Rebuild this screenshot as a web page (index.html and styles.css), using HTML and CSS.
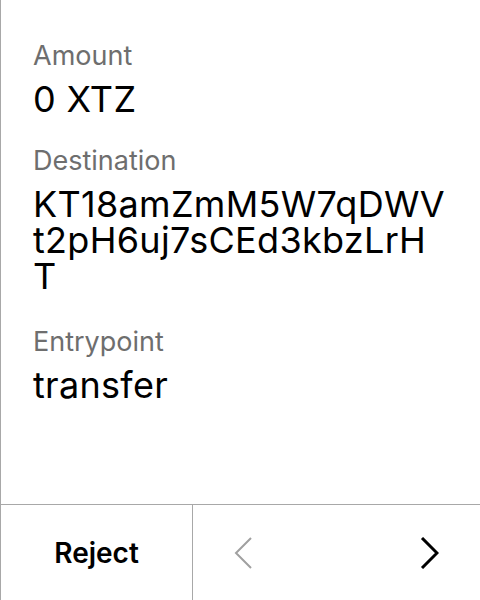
FILE: index.html
```html
<!DOCTYPE html>
<html>
<head>
<meta charset="utf-8">
<link rel="stylesheet" href="styles.css">
</head>
<body>
<div class="screen">
  <div class="content">
    <div class="field">
      <div class="label">Amount</div>
      <div class="value">0 XTZ</div>
    </div>
    <div class="field">
      <div class="label">Destination</div>
      <div class="value multi">KT18amZmM5W7qDWVt2pH6uj7sCEd3kbzLrHT</div>
    </div>
    <div class="field">
      <div class="label">Entrypoint</div>
      <div class="value">transfer</div>
    </div>
  </div>
  <div class="footer">
    <div class="reject">Reject</div>
    <div class="nav">
      <svg class="chev prev" width="20" height="32" viewBox="0 0 20 32"><path d="M17 1 L2 16 L17 31" fill="none" stroke="#a0a0a0" stroke-width="2"/></svg>
      <svg class="chev next" width="20" height="32" viewBox="0 0 20 32"><path d="M3 1 L18 16 L3 31" fill="none" stroke="#000" stroke-width="3"/></svg>
    </div>
  </div>
</div>
</body>
</html>
```
FILE: styles.css
```css
html, body {
  margin: 0;
  padding: 0;
  background: #fff;
}
.screen {
  width: 479px;
  height: 600px;
  border-left: 1px solid #a8a8a8;
  display: flex;
  flex-direction: column;
  font-family: Inter, "Noto Sans", sans-serif;
  color: #000;
}
.content {
  flex: 1;
  padding: 40px 32px 0 32px;
  display: flex;
  flex-direction: column;
  gap: 28px;
}
.label {
  font-size: 27px;
  line-height: 32px;
  color: #6e6e6e;
}
.value {
  font-size: 36px;
  line-height: 36px;
  letter-spacing: 0.3px;
  word-break: break-all;
  margin-top: 9px;
}
.value.multi {
  padding-bottom: 4px;
}
.footer {
  height: 95px;
  border-top: 1px solid #a8a8a8;
  display: flex;
}
.reject {
  width: 191px;
  border-right: 1px solid #a8a8a8;
  display: flex;
  align-items: center;
  justify-content: center;
  font-size: 28px;
  font-weight: 600;
}
.nav {
  flex: 1;
  display: flex;
  align-items: center;
  justify-content: space-between;
  padding: 0 41px 0 41px;
}
```
